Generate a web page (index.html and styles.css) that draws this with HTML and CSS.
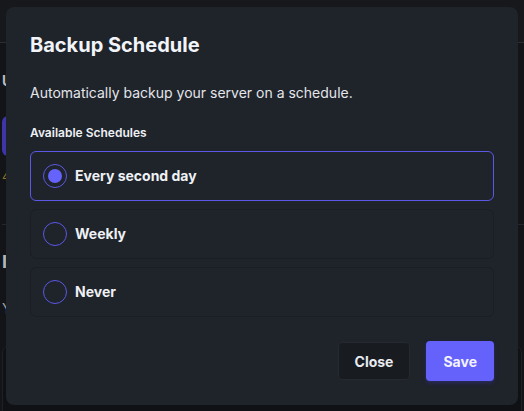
FILE: index.html
```html
<!DOCTYPE html>
<html lang="en">
<head>
<meta charset="utf-8">
<title>Backup Schedule</title>
<link rel="stylesheet" href="styles.css">
</head>
<body>
  <div class="app">
    <header class="app-bar"></header>
    <main class="app-body">
      <section class="panel">
        <h3 class="panel-title">U</h3>
        <button class="panel-btn" aria-label="Backup now"></button>
        <p class="panel-note">4</p>
      </section>
      <section class="panel panel-split">
        <h3 class="panel-heading">I</h3>
        <p class="panel-text">Y</p>
        <div class="panel-box"></div>
      </section>
    </main>
  </div>

  <div class="modal" role="dialog" aria-labelledby="modal-title">
    <h2 class="modal-title" id="modal-title">Backup Schedule</h2>
    <p class="modal-desc">Automatically backup your server on a schedule.</p>
    <div class="field">
      <span class="field-label">Available Schedules</span>
      <div class="options">
        <label class="option option-active">
          <span class="radio radio-on"></span>
          <span class="option-text">Every second day</span>
        </label>
        <label class="option">
          <span class="radio"></span>
          <span class="option-text">Weekly</span>
        </label>
        <label class="option">
          <span class="radio"></span>
          <span class="option-text">Never</span>
        </label>
      </div>
    </div>
    <div class="modal-actions">
      <button class="btn btn-secondary">Close</button>
      <button class="btn btn-primary">Save</button>
    </div>
  </div>
</body>
</html>
```

FILE: styles.css
```css
* { box-sizing: border-box; }

html, body {
  margin: 0;
  height: 100%;
}

body {
  background: #15171b;
  font-family: Inter, "Noto Sans", "Liberation Sans", sans-serif;
  color: #e8ebf0;
  overflow: hidden;
  position: relative;
}

/* Page behind the dialog */
.app {
  height: 100%;
  display: flex;
  flex-direction: column;
}

.app-bar {
  height: 43px;
  flex: none;
  background: #16181c;
  border-bottom: 1px solid #2a2d33;
}

.app-body {
  flex: 1;
  background: #121418;
  padding-left: 2px;
  display: flex;
  flex-direction: column;
}

.panel {
  display: flex;
  flex-direction: column;
  align-items: flex-start;
}

.panel-title {
  margin: 30px 0 0;
  font-size: 14px;
  line-height: 16px;
  font-weight: 700;
  color: #b8bcc4;
}

.panel-btn {
  margin-top: 27px;
  height: 40px;
  width: 60px;
  border: 0;
  border-radius: 6px;
  background: #3d35a8;
}

.panel-note {
  margin: 14px 0 0;
  font-size: 12px;
  line-height: 14px;
  color: #8c7224;
}

.panel-split {
  margin-top: 40px;
  border-top: 1px solid #24272d;
}

.panel-heading {
  margin: 28px 0 0;
  font-size: 18px;
  line-height: 18px;
  font-weight: 700;
  color: #b4b7bd;
}

.panel-text {
  margin: 30px 0 0;
  font-size: 14px;
  line-height: 16px;
  color: #9ca0a8;
}

.panel-box {
  margin-top: 28px;
  width: 520px;
  height: 80px;
  background: #0f1114;
  border: 1px solid #1d2025;
  border-radius: 8px;
}

/* Dialog */
.modal {
  position: absolute;
  left: 6px;
  top: 7px;
  width: 512px;
  padding: 24px;
  background: #1f232a;
  border-radius: 8px;
  display: flex;
  flex-direction: column;
}

.modal-title {
  margin: 0;
  font-size: 20px;
  line-height: 28px;
  font-weight: 700;
  color: #f1f4f8;
}

.modal-desc {
  margin: 24px 0 0;
  font-size: 14px;
  line-height: 20px;
  color: #e3e6eb;
}

.field {
  margin-top: 22px;
  display: flex;
  flex-direction: column;
}

.field-label {
  font-size: 12px;
  line-height: 16px;
  font-weight: 600;
  color: #eef1f5;
}

.options {
  margin-top: 10px;
  display: flex;
  flex-direction: column;
  gap: 8px;
}

.option {
  height: 50px;
  padding: 0 12px;
  display: flex;
  align-items: center;
  gap: 8px;
  border: 1px solid #1b1e24;
  border-radius: 6px;
}

.option-active {
  border-color: #5b58e6;
}

.radio {
  width: 24px;
  height: 24px;
  border-radius: 50%;
  border: 1.5px solid #5b58e6;
  display: flex;
  align-items: center;
  justify-content: center;
}

.radio-on::after {
  content: "";
  width: 14px;
  height: 14px;
  border-radius: 50%;
  background: #6563fb;
}

.option-text {
  font-size: 14px;
  line-height: 20px;
  font-weight: 700;
  color: #eef1f5;
}

.modal-actions {
  margin-top: 24px;
  display: flex;
  justify-content: flex-end;
  gap: 16px;
}

.btn {
  height: 40px;
  padding: 0 17px;
  border-radius: 4px;
  font: inherit;
  font-size: 14px;
  font-weight: 700;
  cursor: pointer;
}

.btn-secondary {
  background: #181b20;
  border: 1px solid #262930;
  color: #e8ebf0;
  height: 38px;
  margin-top: 1px;
  padding: 0 16px;
}

.btn-primary {
  background: #6562fb;
  border: 0;
  color: #f3f3ff;
  box-shadow: 0 2px 4px rgba(60, 56, 200, 0.35);
}
```
